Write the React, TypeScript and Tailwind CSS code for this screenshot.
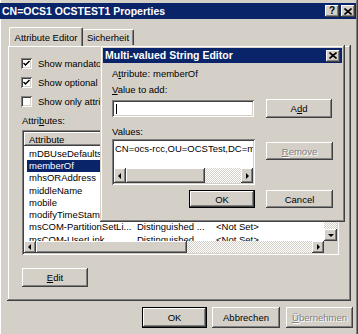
import React from "react";

const RAISED =
  "shadow-[inset_-1px_-1px_#404040,inset_1px_1px_#ffffff,inset_-2px_-2px_#808080,inset_2px_2px_#d4d0c8]";
const RAISED_DEF =
  "shadow-[inset_0_0_0_1px_#000000,inset_-2px_-2px_#404040,inset_2px_2px_#ffffff,inset_-3px_-3px_#808080]";
const SUNKEN =
  "shadow-[inset_1px_1px_#808080,inset_-1px_-1px_#ffffff,inset_2px_2px_#404040,inset_-2px_-2px_#d4d0c8]";
const WINDOW =
  "shadow-[inset_-1px_-1px_#404040,inset_1px_1px_#d4d0c8,inset_-2px_-2px_#808080,inset_2px_2px_#ffffff]";
const DITHER =
  "bg-[repeating-conic-gradient(#d4d0c8_0_25%,#ffffff_0_50%)] bg-[length:2px_2px]";

function Btn({
  className,
  children,
  def,
  disabled,
}: {
  className: string;
  children: React.ReactNode;
  def?: boolean;
  disabled?: boolean;
}) {
  return (
    <div
      className={`${className} bg-[#d4d0c8] flex items-center justify-center shrink-0 ${
        def ? RAISED_DEF : RAISED
      } ${disabled ? "text-[#808080] [text-shadow:1px_1px_0_#ffffff]" : "text-black"}`}
    >
      <span>{children}</span>
    </div>
  );
}

function Arrow({ dir, className }: { dir: "l" | "r" | "d"; className: string }) {
  return (
    <div className={`${className} bg-[#d4d0c8] ${RAISED} flex items-center justify-center shrink-0`}>
      <svg width="6" height="6" viewBox="0 0 6 6">
        {dir === "l" && <polygon points="4,0 4,6 1,3" fill="#000" />}
        {dir === "r" && <polygon points="2,0 2,6 5,3" fill="#000" />}
        {dir === "d" && <polygon points="0,2 6,2 3,5" fill="#000" />}
      </svg>
    </div>
  );
}

function TitleBtn({ children }: { children: React.ReactNode }) {
  return (
    <div className={`w-[14px] h-[12px] bg-[#d4d0c8] ${RAISED} flex items-center justify-center`}>
      {children}
    </div>
  );
}

function CloseGlyph() {
  return (
    <svg width="8" height="7" viewBox="0 0 8 7">
      <path d="M0.5 0.5 L7.5 6.5 M7.5 0.5 L0.5 6.5" stroke="#000" strokeWidth="1.6" />
    </svg>
  );
}

function Check({ checked }: { checked: boolean }) {
  return (
    <div className={`w-[11px] h-[11px] bg-white ${SUNKEN} flex items-center justify-center shrink-0`}>
      {checked && (
        <svg width="7" height="7" viewBox="0 0 7 7">
          <path d="M0.5 3 L2.5 5 L6.5 1" stroke="#000" strokeWidth="1.5" fill="none" />
        </svg>
      )}
    </div>
  );
}

const rows: [string, string, string][] = [
  ["mDBUseDefaults", "Boolean", "<Not Set>"],
  ["memberOf", "Distinguished ...", "CN=ocs-rcc,OU=..."],
  ["mhsORAddress", "Unicode String", "<Not Set>"],
  ["middleName", "Unicode String", "<Not Set>"],
  ["mobile", "Unicode String", "<Not Set>"],
  ["modifyTimeStamp", "Generalized Ti...", "<Not Set>"],
  ["msCOM-PartitionSetLi...", "Distinguished ...", "<Not Set>"],
  ["msCOM-UserLink", "Distinguished ...", "<Not Set>"],
];

export default function App() {
  return (
    <div className="w-[358px] h-[334px] bg-[#d4d0c8] relative overflow-hidden text-[9.5px] leading-[13px] text-black font-['Liberation_Sans',Arial,sans-serif] shadow-[inset_1px_0_#ffffff,inset_-1px_0_#404040,inset_-2px_0_#808080]">
      {/* Title bar */}
      <div className="mt-[3px] mr-[2px] h-[16px] bg-[#0a246a] flex items-center pl-[2px] pr-[1px]">
        <span className="text-white font-bold text-[10.5px]">CN=OCS1 OCSTEST1 Properties</span>
        <div className="ml-auto flex gap-[2px]">
          <TitleBtn>
            <span className="font-bold text-[10px] leading-[10px]">?</span>
          </TitleBtn>
          <TitleBtn>
            <CloseGlyph />
          </TitleBtn>
        </div>
      </div>

      {/* Tabs */}
      <div className="ml-[9px] mt-[8px] h-[18px] flex items-end relative z-10">
        <div className="w-[74px] h-[19px] -mb-[1px] bg-[#d4d0c8] border-l border-t border-white border-r border-r-[#404040] rounded-t-[2px] flex items-center justify-center shadow-[inset_-1px_0_#808080]">
          Attribute Editor
        </div>
        <div className="w-[51px] h-[16px] bg-[#d4d0c8] border-t border-white border-r border-r-[#404040] rounded-t-[2px] flex items-center justify-center shadow-[inset_-1px_0_#808080]">
          Sicherheit
        </div>
      </div>

      {/* Tab panel */}
      <div className={`ml-[7px] w-[344px] h-[256px] ${WINDOW} pl-[14px] pt-[12px]`}>
        <div className="flex flex-col gap-[6px]">
          <div className="h-[13px] flex items-center gap-[6px]">
            <Check checked />
            <span>Show mandatory attributes</span>
          </div>
          <div className="h-[13px] flex items-center gap-[6px]">
            <Check checked />
            <span>Show optional attributes</span>
          </div>
          <div className="h-[13px] flex items-center gap-[6px]">
            <Check checked={false} />
            <span>Show only attributes that have values</span>
          </div>
        </div>
        <div className="mt-[6px] ml-[1px] h-[13px]">
          Attri<span className="underline">b</span>utes:
        </div>

        {/* list */}
        <div className={`mt-[3px] ml-[1px] w-[317px] h-[125px] bg-white ${SUNKEN} p-[2px] flex flex-col`}>
          <div className="flex flex-1 min-h-0">
            <div className="flex-1 overflow-hidden bg-white">
              <div className="h-[14px] flex">
                <div className={`w-[109px] bg-[#d4d0c8] ${RAISED} pl-[5px] flex items-center`}>Attribute</div>
                <div className={`w-[79px] bg-[#d4d0c8] ${RAISED} pl-[4px] flex items-center`}>Syntax</div>
                <div className={`flex-1 bg-[#d4d0c8] ${RAISED} pl-[4px] flex items-center`}>Value</div>
              </div>
              <div className="pt-[1px]">
                {rows.map(([a, s, v]) => (
                  <div key={a} className="h-[12.3px] flex items-center whitespace-nowrap">
                    <div className="w-[109px] pl-[3px] overflow-hidden">
                      <span
                        className={
                          a === "memberOf"
                            ? "bg-[#0a246a] text-white pl-[2px] pr-[2px] inline-block w-[104px] leading-[12px]"
                            : "pl-[2px] inline-block leading-[12px]"
                        }
                      >
                        {a}
                      </span>
                    </div>
                    <div className="w-[79px] pl-[4px] overflow-hidden">{s}</div>
                    <div className="flex-1 pl-[4px] overflow-hidden">{v}</div>
                  </div>
                ))}
              </div>
            </div>
            <div className={`w-[13px] ${DITHER} flex flex-col justify-end`}>
              <Arrow dir="d" className="w-[13px] h-[12px]" />
            </div>
          </div>
          <div className="flex h-[12px]">
            <div className={`flex-1 flex ${DITHER}`}>
              <Arrow dir="l" className="w-[12px] h-[12px]" />
              <div className={`w-[151px] h-[12px] bg-[#d4d0c8] ${RAISED}`} />
              <div className="flex-1" />
              <Arrow dir="r" className="w-[12px] h-[12px]" />
            </div>
            <div className="w-[13px] bg-[#d4d0c8]" />
          </div>
        </div>

        <Btn className="mt-[13px] ml-[1px] w-[66px] h-[19px]">
          <span className="underline">E</span>dit
        </Btn>
      </div>

      {/* Bottom buttons */}
      <div className="mt-[6px] pl-[142px] flex">
        <Btn def className="w-[65px] h-[21px]">OK</Btn>
        <Btn className="ml-[5px] w-[68px] h-[21px]">Abbrechen</Btn>
        <Btn disabled className="ml-[6px] w-[67px] h-[21px]">
          <span className="underline">Ü</span>bernehmen
        </Btn>
      </div>

      {/* Multi-valued String Editor dialog (overlay) */}
      <div className={`absolute left-[100px] top-[45px] w-[245px] h-[177px] bg-[#d4d0c8] ${WINDOW} p-[3px] z-20`}>
        <div className="h-[15px] bg-[#0a246a] flex items-center pl-[2px] pr-[2px]">
          <span className="text-white font-bold text-[10.5px]">Multi-valued String Editor</span>
          <div className="ml-auto">
            <TitleBtn>
              <CloseGlyph />
            </TitleBtn>
          </div>
        </div>
        <div className="pl-[9px]">
          <div className="mt-[4px] h-[13px] flex">
            <span className="w-[41px]">
              A<span className="underline">t</span>tribute:
            </span>
            <span>memberOf</span>
          </div>
          <div className="mt-[3px] h-[13px]">
            <span className="underline">V</span>alue to add:
          </div>
          <div className="mt-[4px] flex items-start gap-[12px]">
            <div className={`w-[142px] h-[17px] bg-white ${SUNKEN} flex items-center pl-[4px]`}>
              <div className="w-[1px] h-[10px] bg-black" />
            </div>
            <Btn className="-mt-[1px] w-[66px] h-[19px]">
              A<span className="underline">d</span>d
            </Btn>
          </div>
          <div className="mt-[7px] h-[13px]">Values:</div>
          <div className="mt-[1px] flex items-start gap-[11px]">
            <div className={`w-[143px] h-[46px] bg-white ${SUNKEN} p-[2px] flex flex-col`}>
              <div className="flex-1 overflow-hidden whitespace-nowrap pl-[1px] pt-[1px]">
                CN=ocs-rcc,OU=OCSTest,DC=mrc,DC=local
              </div>
              <div className={`h-[15px] flex ${DITHER}`}>
                <Arrow dir="l" className="w-[12px] h-[15px]" />
                <div className={`w-[79px] h-[15px] bg-[#d4d0c8] ${RAISED}`} />
                <div className="flex-1" />
                <Arrow dir="r" className="w-[12px] h-[15px]" />
              </div>
            </div>
            <Btn disabled className="mt-[3px] w-[67px] h-[18px]">
              <span className="underline">R</span>emove
            </Btn>
          </div>
          <div className="mt-[5px] flex gap-[11px]">
            <div className="w-[143px] flex justify-end">
              <Btn def className="w-[66px] h-[18px]">OK</Btn>
            </div>
            <Btn className="w-[67px] h-[18px]">Cancel</Btn>
          </div>
        </div>
      </div>
    </div>
  );
}
